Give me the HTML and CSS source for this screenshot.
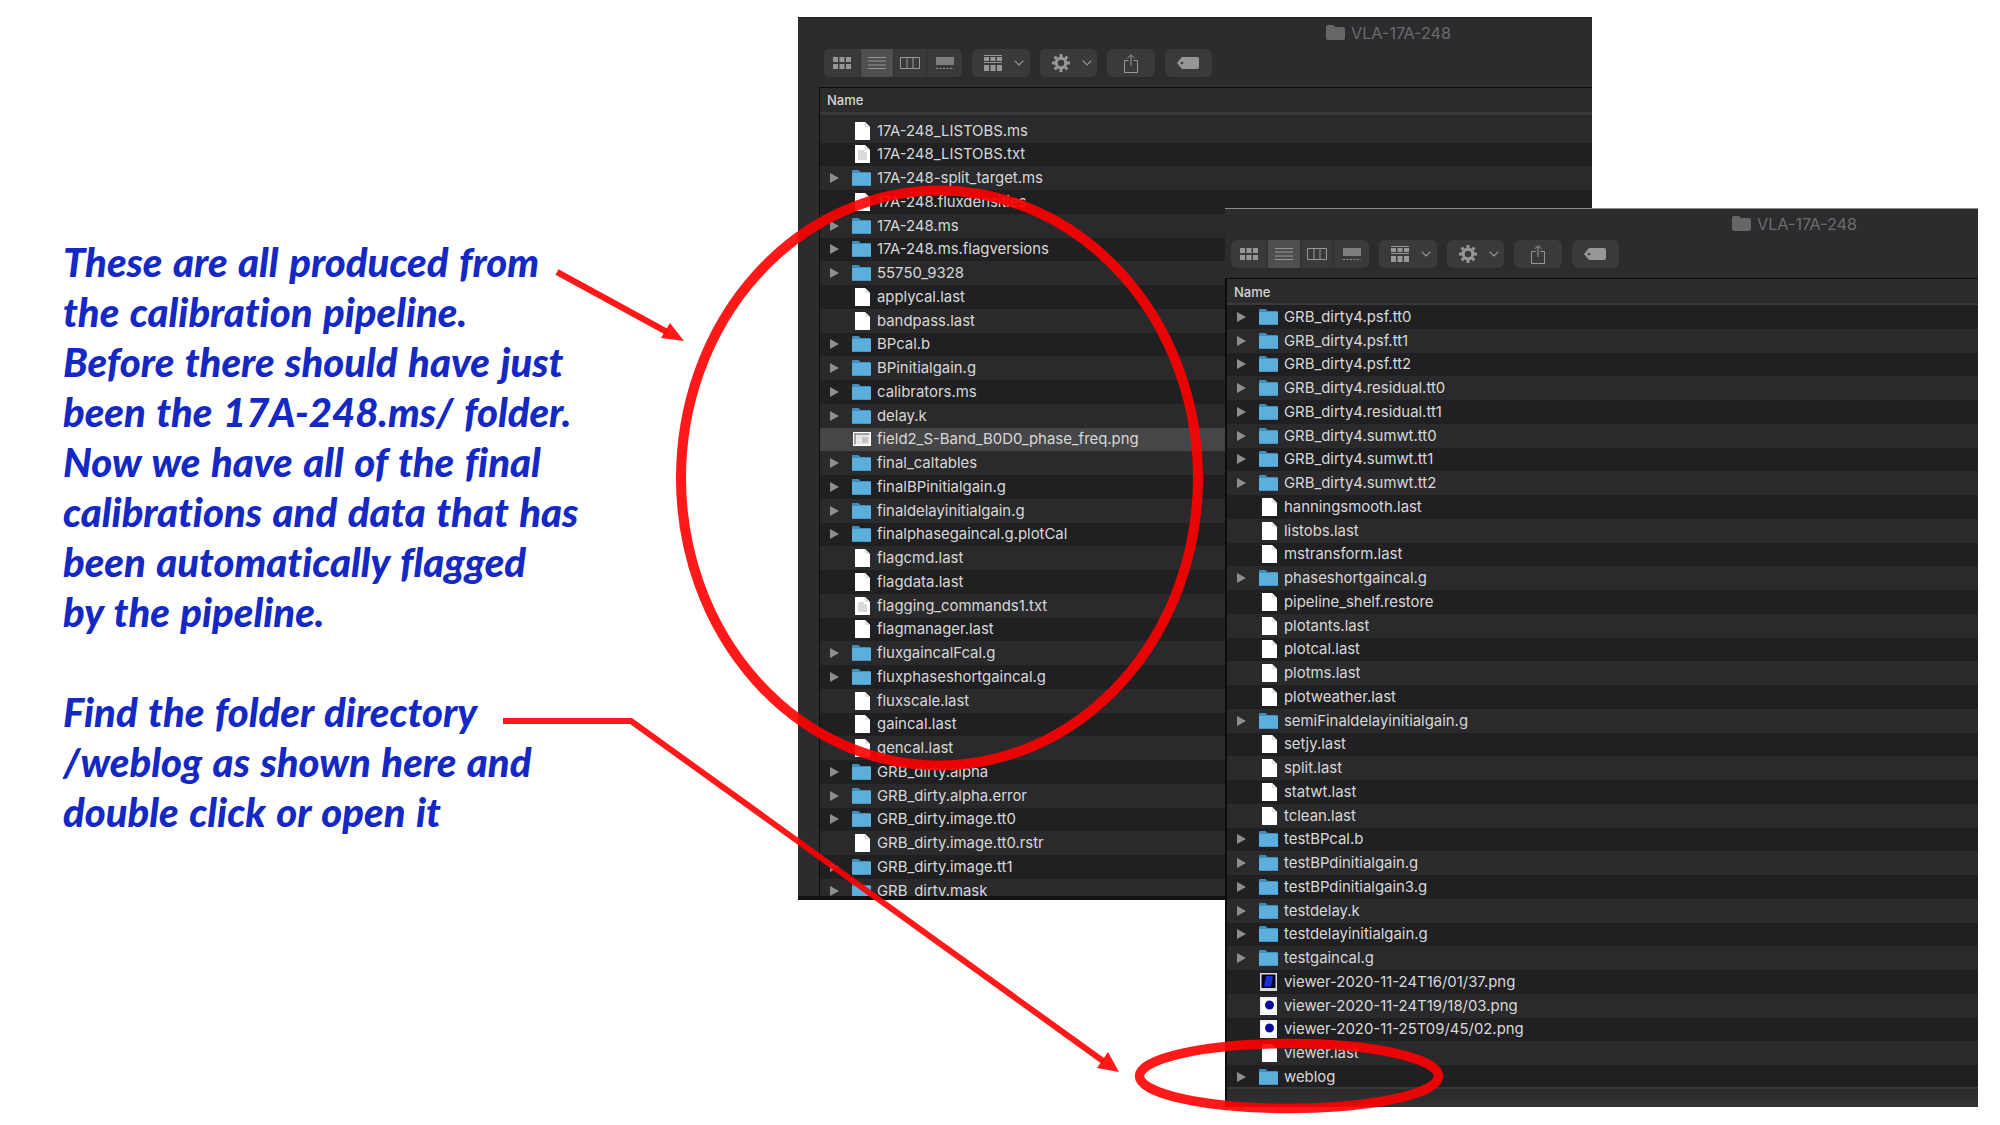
FILE: index.html
```html
<!DOCTYPE html>
<html lang="en">
<head>
  <meta charset="UTF-8">
  <title>VLA-17A-248 pipeline output</title>
  <link rel="stylesheet" href="styles.css">
</head>
<body>
  <svg class="defs" aria-hidden="true">
    <symbol id="folder" viewBox="0 0 19 16">
      <path d="M0 3V1.2Q0 0 1.2 0H6.5L8.5 2H17.8Q19 2 19 3.2V4H0Z" fill="#3f8fbd"/>
      <path d="M0 4Q0 3 1 3H18Q19 3 19 4V14.8Q19 16 17.8 16H1.2Q0 16 0 14.8Z" fill="#5cafdc"/>
      <rect y="15" width="19" height="1" fill="#4a94c0"/>
    </symbol>
    <symbol id="file" viewBox="0 0 15 18">
      <path d="M0 0H10L15 5V18H0Z" fill="#fff"/>
      <path d="M10 0L15 5H10Z" fill="#e4e4e4"/>
    </symbol>
    <symbol id="doc" viewBox="0 0 15 18">
      <path d="M0 0H10L15 5V18H0Z" fill="#fff"/>
      <path d="M10 0L15 5H10Z" fill="#e4e4e4"/>
      <path d="M3 6H9M3 8H12M3 10H12M3 12H12M3 14H12" stroke="#b4b4b4" stroke-width="1"/>
    </symbol>
    <symbol id="plot" viewBox="0 0 18 14">
      <rect width="18" height="14" fill="#fff"/>
      <rect x="1.500" y="1.500" width="15" height="11" fill="#e6e6e6"/>
      <path d="M1.500 2H16.500M2 1.500V12.500" stroke="#5a5a5a"/>
      <rect x="9" y="5" width="6" height="6" fill="#c4c4c4"/>
    </symbol>
    <symbol id="viewer-noise" viewBox="0 0 17 18">
      <rect width="17" height="18" fill="#dcdcdc"/>
      <rect x="1.500" y="1.500" width="14" height="13.500" fill="#04041c"/>
      <path d="M6 3H13L11 13.500H4Z" fill="#1a30d8"/>
    </symbol>
    <symbol id="viewer-dot" viewBox="0 0 17 18">
      <rect width="17" height="18" fill="#fff"/>
      <rect x="1" y="1" width="15" height="15" fill="none" stroke="#e6e6e6"/>
      <circle cx="9.500" cy="8" r="4.500" fill="#0a0aa0"/>
    </symbol>
    <symbol id="win-folder" viewBox="0 0 19 15">
      <path d="M0 2Q0 0 2 0H7L9 2H17Q19 2 19 4V13Q19 15 17 15H2Q0 15 0 13Z" fill="#666668"/>
    </symbol>
    <symbol id="tb-grid" viewBox="0 0 18 12">
      <path d="M0 0H5V5H0ZM6.500 0H11.500V5H6.500ZM13 0H18V5H13ZM0 7H5V12H0ZM6.500 7H11.500V12H6.500ZM13 7H18V12H13Z" fill="#97979a"/>
    </symbol>
    <symbol id="tb-list" viewBox="0 0 18 12">
      <path d="M0 .5H18M0 4H18M0 8H18M0 11.500H18" stroke="#97979a"/>
    </symbol>
    <symbol id="tb-columns" viewBox="0 0 20 12">
      <path d="M.5 .5H19.500V11.500H.5ZM7 .5V11.500M13 .5V11.500" fill="none" stroke="#97979a"/>
    </symbol>
    <symbol id="tb-gallery" viewBox="0 0 18 12">
      <rect width="18" height="8" fill="#7d7d80"/>
      <path d="M0 11.500H18" stroke="#97979a" stroke-dasharray="2 1.500"/>
    </symbol>
    <symbol id="tb-group" viewBox="0 0 18 16">
      <path d="M0 .5H18M0 7.500H18" stroke="#97979a"/>
      <path d="M0 2H5V6H0ZM6.500 2H11.500V6H6.500ZM13 2H18V6H13ZM0 10H5V16H0ZM6.500 10H11.500V16H6.500ZM13 10H18V16H13Z" fill="#97979a"/>
    </symbol>
    <symbol id="tb-gear" viewBox="0 0 18 18">
      <circle cx="9" cy="9" r="4.800" fill="none" stroke="#97979a" stroke-width="3"/>
      <path d="M9 0V18M0 9H18M2.600 2.600L15.400 15.400M15.400 2.600L2.600 15.400" stroke="#97979a" stroke-width="3" stroke-dasharray="3 12 3"/>
    </symbol>
    <symbol id="tb-share" viewBox="0 0 14 19">
      <path d="M4.500 6.500H.5V18.500H13.500V6.500H9.500M7 12V1M3.500 4L7 .8L10.500 4" fill="none" stroke="#97979a"/>
    </symbol>
    <symbol id="tb-tag" viewBox="0 0 22 12">
      <path d="M0 6L5 0H20Q22 0 22 2V10Q22 12 20 12H5Z" fill="#97979a"/>
      <circle cx="5" cy="6" r="1.300" fill="#3a3a3c"/>
    </symbol>
    <symbol id="chevron" viewBox="0 0 10 6">
      <path d="M.7 .7L5 5L9.300 .7" fill="none" stroke="#97979a" stroke-width="1.200"/>
    </symbol>
  </svg>

  <main class="slide">
    <section class="notes">
      <p>These are all produced from<br>the calibration pipeline.<br>Before there should have just<br>been the 17A-248.ms/ folder.<br>Now we have all of the final<br>calibrations and data that has<br>been automatically flagged<br>by the pipeline.</p>
      <p>Find the folder directory<br>/weblog as shown here and<br>double click or open it</p>
    </section>

    <section class="window window-back">
      <div class="titlebar"><svg class="win-icon"><use href="#win-folder"/></svg>VLA-17A-248</div>
      <div class="toolbar">
        <div class="seg-group">
          <span class="seg seg-a"><svg class="ic-grid"><use href="#tb-grid"/></svg></span>
          <span class="seg seg-b on"><svg class="ic-grid"><use href="#tb-list"/></svg></span>
          <span class="seg seg-b"><svg class="ic-cols"><use href="#tb-columns"/></svg></span>
          <span class="seg seg-c"><svg class="ic-grid"><use href="#tb-gallery"/></svg></span>
        </div>
        <span class="tbtn tbtn-menu"><svg class="ic-group"><use href="#tb-group"/></svg><svg class="ic-chev"><use href="#chevron"/></svg></span>
        <span class="tbtn tbtn-menu"><svg class="ic-gear"><use href="#tb-gear"/></svg><svg class="ic-chev"><use href="#chevron"/></svg></span>
        <span class="tbtn"><svg class="ic-share"><use href="#tb-share"/></svg></span>
        <span class="tbtn"><svg class="ic-tag"><use href="#tb-tag"/></svg></span>
      </div>
      <div class="pane">
        <div class="list-head">Name</div>
        <ul class="files odd-light">
          <li class="row"><svg class="ic-file"><use href="#file"/></svg>17A-248_LISTOBS.ms</li>
          <li class="row"><svg class="ic-file"><use href="#doc"/></svg>17A-248_LISTOBS.txt</li>
          <li class="row dir"><svg class="ic-dir"><use href="#folder"/></svg>17A-248-split_target.ms</li>
          <li class="row"><svg class="ic-file"><use href="#file"/></svg>17A-248.fluxdensities</li>
          <li class="row dir"><svg class="ic-dir"><use href="#folder"/></svg>17A-248.ms</li>
          <li class="row dir"><svg class="ic-dir"><use href="#folder"/></svg>17A-248.ms.flagversions</li>
          <li class="row dir"><svg class="ic-dir"><use href="#folder"/></svg>55750_9328</li>
          <li class="row"><svg class="ic-file"><use href="#file"/></svg>applycal.last</li>
          <li class="row"><svg class="ic-file"><use href="#file"/></svg>bandpass.last</li>
          <li class="row dir"><svg class="ic-dir"><use href="#folder"/></svg>BPcal.b</li>
          <li class="row dir"><svg class="ic-dir"><use href="#folder"/></svg>BPinitialgain.g</li>
          <li class="row dir"><svg class="ic-dir"><use href="#folder"/></svg>calibrators.ms</li>
          <li class="row dir"><svg class="ic-dir"><use href="#folder"/></svg>delay.k</li>
          <li class="row selected"><svg class="ic-plot"><use href="#plot"/></svg>field2_S-Band_B0D0_phase_freq.png</li>
          <li class="row dir"><svg class="ic-dir"><use href="#folder"/></svg>final_caltables</li>
          <li class="row dir"><svg class="ic-dir"><use href="#folder"/></svg>finalBPinitialgain.g</li>
          <li class="row dir"><svg class="ic-dir"><use href="#folder"/></svg>finaldelayinitialgain.g</li>
          <li class="row dir"><svg class="ic-dir"><use href="#folder"/></svg>finalphasegaincal.g.plotCal</li>
          <li class="row"><svg class="ic-file"><use href="#file"/></svg>flagcmd.last</li>
          <li class="row"><svg class="ic-file"><use href="#file"/></svg>flagdata.last</li>
          <li class="row"><svg class="ic-file"><use href="#doc"/></svg>flagging_commands1.txt</li>
          <li class="row"><svg class="ic-file"><use href="#file"/></svg>flagmanager.last</li>
          <li class="row dir"><svg class="ic-dir"><use href="#folder"/></svg>fluxgaincalFcal.g</li>
          <li class="row dir"><svg class="ic-dir"><use href="#folder"/></svg>fluxphaseshortgaincal.g</li>
          <li class="row"><svg class="ic-file"><use href="#file"/></svg>fluxscale.last</li>
          <li class="row"><svg class="ic-file"><use href="#file"/></svg>gaincal.last</li>
          <li class="row"><svg class="ic-file"><use href="#file"/></svg>gencal.last</li>
          <li class="row dir"><svg class="ic-dir"><use href="#folder"/></svg>GRB_dirty.alpha</li>
          <li class="row dir"><svg class="ic-dir"><use href="#folder"/></svg>GRB_dirty.alpha.error</li>
          <li class="row dir"><svg class="ic-dir"><use href="#folder"/></svg>GRB_dirty.image.tt0</li>
          <li class="row"><svg class="ic-file"><use href="#file"/></svg>GRB_dirty.image.tt0.rstr</li>
          <li class="row dir"><svg class="ic-dir"><use href="#folder"/></svg>GRB_dirty.image.tt1</li>
          <li class="row dir"><svg class="ic-dir"><use href="#folder"/></svg>GRB_dirty.mask</li>
        </ul>
      </div>
    </section>

    <section class="window window-front">
      <div class="titlebar"><svg class="win-icon"><use href="#win-folder"/></svg>VLA-17A-248</div>
      <div class="toolbar">
        <div class="seg-group">
          <span class="seg seg-a"><svg class="ic-grid"><use href="#tb-grid"/></svg></span>
          <span class="seg seg-b on"><svg class="ic-grid"><use href="#tb-list"/></svg></span>
          <span class="seg seg-b"><svg class="ic-cols"><use href="#tb-columns"/></svg></span>
          <span class="seg seg-c"><svg class="ic-grid"><use href="#tb-gallery"/></svg></span>
        </div>
        <span class="tbtn tbtn-menu"><svg class="ic-group"><use href="#tb-group"/></svg><svg class="ic-chev"><use href="#chevron"/></svg></span>
        <span class="tbtn tbtn-menu"><svg class="ic-gear"><use href="#tb-gear"/></svg><svg class="ic-chev"><use href="#chevron"/></svg></span>
        <span class="tbtn"><svg class="ic-share"><use href="#tb-share"/></svg></span>
        <span class="tbtn"><svg class="ic-tag"><use href="#tb-tag"/></svg></span>
      </div>
      <div class="pane">
        <div class="list-head">Name</div>
        <ul class="files even-light">
          <li class="row dir"><svg class="ic-dir"><use href="#folder"/></svg>GRB_dirty4.psf.tt0</li>
          <li class="row dir"><svg class="ic-dir"><use href="#folder"/></svg>GRB_dirty4.psf.tt1</li>
          <li class="row dir"><svg class="ic-dir"><use href="#folder"/></svg>GRB_dirty4.psf.tt2</li>
          <li class="row dir"><svg class="ic-dir"><use href="#folder"/></svg>GRB_dirty4.residual.tt0</li>
          <li class="row dir"><svg class="ic-dir"><use href="#folder"/></svg>GRB_dirty4.residual.tt1</li>
          <li class="row dir"><svg class="ic-dir"><use href="#folder"/></svg>GRB_dirty4.sumwt.tt0</li>
          <li class="row dir"><svg class="ic-dir"><use href="#folder"/></svg>GRB_dirty4.sumwt.tt1</li>
          <li class="row dir"><svg class="ic-dir"><use href="#folder"/></svg>GRB_dirty4.sumwt.tt2</li>
          <li class="row"><svg class="ic-file"><use href="#file"/></svg>hanningsmooth.last</li>
          <li class="row"><svg class="ic-file"><use href="#file"/></svg>listobs.last</li>
          <li class="row"><svg class="ic-file"><use href="#file"/></svg>mstransform.last</li>
          <li class="row dir"><svg class="ic-dir"><use href="#folder"/></svg>phaseshortgaincal.g</li>
          <li class="row"><svg class="ic-file"><use href="#file"/></svg>pipeline_shelf.restore</li>
          <li class="row"><svg class="ic-file"><use href="#file"/></svg>plotants.last</li>
          <li class="row"><svg class="ic-file"><use href="#file"/></svg>plotcal.last</li>
          <li class="row"><svg class="ic-file"><use href="#file"/></svg>plotms.last</li>
          <li class="row"><svg class="ic-file"><use href="#file"/></svg>plotweather.last</li>
          <li class="row dir"><svg class="ic-dir"><use href="#folder"/></svg>semiFinaldelayinitialgain.g</li>
          <li class="row"><svg class="ic-file"><use href="#file"/></svg>setjy.last</li>
          <li class="row"><svg class="ic-file"><use href="#file"/></svg>split.last</li>
          <li class="row"><svg class="ic-file"><use href="#file"/></svg>statwt.last</li>
          <li class="row"><svg class="ic-file"><use href="#file"/></svg>tclean.last</li>
          <li class="row dir"><svg class="ic-dir"><use href="#folder"/></svg>testBPcal.b</li>
          <li class="row dir"><svg class="ic-dir"><use href="#folder"/></svg>testBPdinitialgain.g</li>
          <li class="row dir"><svg class="ic-dir"><use href="#folder"/></svg>testBPdinitialgain3.g</li>
          <li class="row dir"><svg class="ic-dir"><use href="#folder"/></svg>testdelay.k</li>
          <li class="row dir"><svg class="ic-dir"><use href="#folder"/></svg>testdelayinitialgain.g</li>
          <li class="row dir"><svg class="ic-dir"><use href="#folder"/></svg>testgaincal.g</li>
          <li class="row"><svg class="ic-thumb"><use href="#viewer-noise"/></svg>viewer-2020-11-24T16/01/37.png</li>
          <li class="row"><svg class="ic-thumb"><use href="#viewer-dot"/></svg>viewer-2020-11-24T19/18/03.png</li>
          <li class="row"><svg class="ic-thumb"><use href="#viewer-dot"/></svg>viewer-2020-11-25T09/45/02.png</li>
          <li class="row"><svg class="ic-file"><use href="#file"/></svg>viewer.last</li>
          <li class="row dir"><svg class="ic-dir"><use href="#folder"/></svg>weblog</li>
        </ul>
        <div class="statusbar"></div>
      </div>
    </section>

    <!-- red annotations drawn over the screenshots -->
    <svg class="marks" viewBox="0 0 2000 1125" aria-hidden="true">
      <g fill="none" stroke="#f00" stroke-opacity=".9">
        <ellipse cx="939.500" cy="478" rx="258.500" ry="287.500" stroke-width="10"/>
        <ellipse cx="1289" cy="1076" rx="149.500" ry="32.500" stroke-width="9.500"/>
        <path d="M557 272L667 332" stroke-width="6.500"/>
        <path d="M503 721H631L1103 1061" stroke-width="6"/>
      </g>
      <path d="M684 341L661 338L670 323Z" fill="#f00" fill-opacity=".9"/>
      <path d="M1119 1072L1097 1068L1108 1052Z" fill="#f00" fill-opacity=".9"/>
    </svg>
  </main>
</body>
</html>
```

FILE: styles.css
```css
* {
  box-sizing: border-box;
}
body {
  margin: 0;
  background: #fff;
  font-family: "Inter", "Liberation Sans", sans-serif;
}
.defs {
  position: absolute;
  width: 0;
  height: 0;
}
.slide {
  position: relative;
  width: 2000px;
  height: 1125px;
  overflow: hidden;
}

/* left hand notes */
.notes {
  padding: 237px 0 0 63px;
  font-family: "Lato", "Open Sans", sans-serif;
  font-size: 40px;
  font-weight: 900;
  font-style: italic;
  font-variant-ligatures: none;
  word-spacing: 2px;
  line-height: 50px;
  color: #1428c4;
}
.notes p {
  margin: 0 0 50px 0;
}

/* finder windows */
.window {
  position: absolute;
  background: #2c2c2e;
  display: flex;
  flex-direction: column;
  overflow: hidden;
}
.window-back {
  left: 798px;
  top: 17px;
  width: 794px;
  height: 883px;
  border-top: 1px solid #222;
  border-bottom: 4px solid #111;
}
.window-front {
  left: 1225px;
  top: 208px;
  width: 753px;
  height: 899px;
  border-top: 1px solid #8c8c8c;
}
.titlebar {
  height: 29px;
  flex: none;
  display: flex;
  align-items: center;
  gap: 6px;
  color: #6b6b6d;
  font-size: 16.2px;
}
.window-back .titlebar {
  padding-left: 528px;
}
.window-front .titlebar {
  padding-left: 507px;
}
.win-icon {
  width: 19px;
  height: 15px;
}
.toolbar {
  height: 40px;
  flex: none;
  display: flex;
  gap: 10px;
  align-items: flex-start;
  padding-top: 2px;
}
.window-back .toolbar {
  padding-left: 26px;
}
.window-front .toolbar {
  padding-left: 6px;
}
.seg-group {
  display: flex;
  height: 28px;
  border-radius: 6px;
  overflow: hidden;
  background: #3a3a3c;
}
.seg {
  display: flex;
  align-items: center;
  justify-content: center;
  border-right: 1px solid #2e2e30;
}
.seg:last-child {
  border-right: none;
}
.seg-a { width: 37px; }
.seg-b { width: 33px; }
.seg-c { width: 35px; }
.seg.on {
  background: #4f4f51;
}
.tbtn {
  height: 28px;
  width: 47.5px;
  border-radius: 6px;
  background: #3a3a3c;
  display: flex;
  align-items: center;
  justify-content: center;
}
.tbtn-menu {
  width: 57.5px;
  gap: 12px;
  justify-content: flex-start;
  padding-left: 12px;
}
.ic-grid { width: 18px; height: 12px; }
.ic-cols { width: 20px; height: 12px; }
.ic-group { width: 18px; height: 16px; }
.ic-gear { width: 18px; height: 18px; }
.ic-chev { width: 10px; height: 6px; }
.ic-share { width: 14px; height: 19px; }
.ic-tag { width: 22px; height: 12px; }

.pane {
  flex: 1;
  min-height: 0;
  display: flex;
  flex-direction: column;
  border-top: 1px solid #0c0c0c;
  border-left: 1px solid #0c0c0c;
}
.window-back .pane {
  margin-left: 21px;
}
.window-front .pane {
  border-left-width: 2px;
}
.list-head {
  height: 27px;
  flex: none;
  display: flex;
  align-items: center;
  padding: 0 0 1px 7px;
  font-size: 13px;
  font-weight: 500;
  color: #d6d6d6;
  background: #2c2c2e;
  border-bottom: 3px solid #3a3a3c;
}
.window-front .list-head {
  height: 26px;
  padding: 2px 0 0 7px;
  border-bottom-width: 2px;
}
.files {
  list-style: none;
  margin: 0;
  padding: 3.75px 0 0 0;
  flex: 1;
  min-height: 0;
  overflow: hidden;
  background: #28282a;
}
.window-front .files {
  padding-top: 0;
}
.row {
  height: 23.75px;
  display: flex;
  align-items: center;
  font-size: 14.9px;
  color: #d8d8d8;
  white-space: nowrap;
  background: #202022;
}
.row::before {
  content: "";
  width: 0;
  border-left: 9px solid transparent;
  border-top: 5px solid transparent;
  border-bottom: 5px solid transparent;
  margin-left: 10px;
  margin-right: 13px;
}
.row.dir::before {
  border-left-color: #8e8e8e;
}
.odd-light .row:nth-child(odd),
.even-light .row:nth-child(even) {
  background: #2a2a2c;
}
.row.selected,
.odd-light .row.selected {
  background: #464648;
}
.row svg {
  flex: none;
}
.ic-dir { width: 19px; height: 16px; margin-right: 6px; }
.ic-file { width: 15px; height: 18px; margin: 0 7px 0 3px; }
.ic-plot { width: 18px; height: 14px; margin: 0 6px 0 1px; }
.ic-thumb { width: 17px; height: 18px; margin: 0 7px 0 1px; }
.statusbar {
  height: 20px;
  flex: none;
  border-top: 2px solid #3a3a3c;
  background: linear-gradient(#2a2a2c, #333335);
}

/* red circles and arrows */
.marks {
  position: absolute;
  left: 0;
  top: 0;
  width: 2000px;
  height: 1125px;
  pointer-events: none;
}
```
